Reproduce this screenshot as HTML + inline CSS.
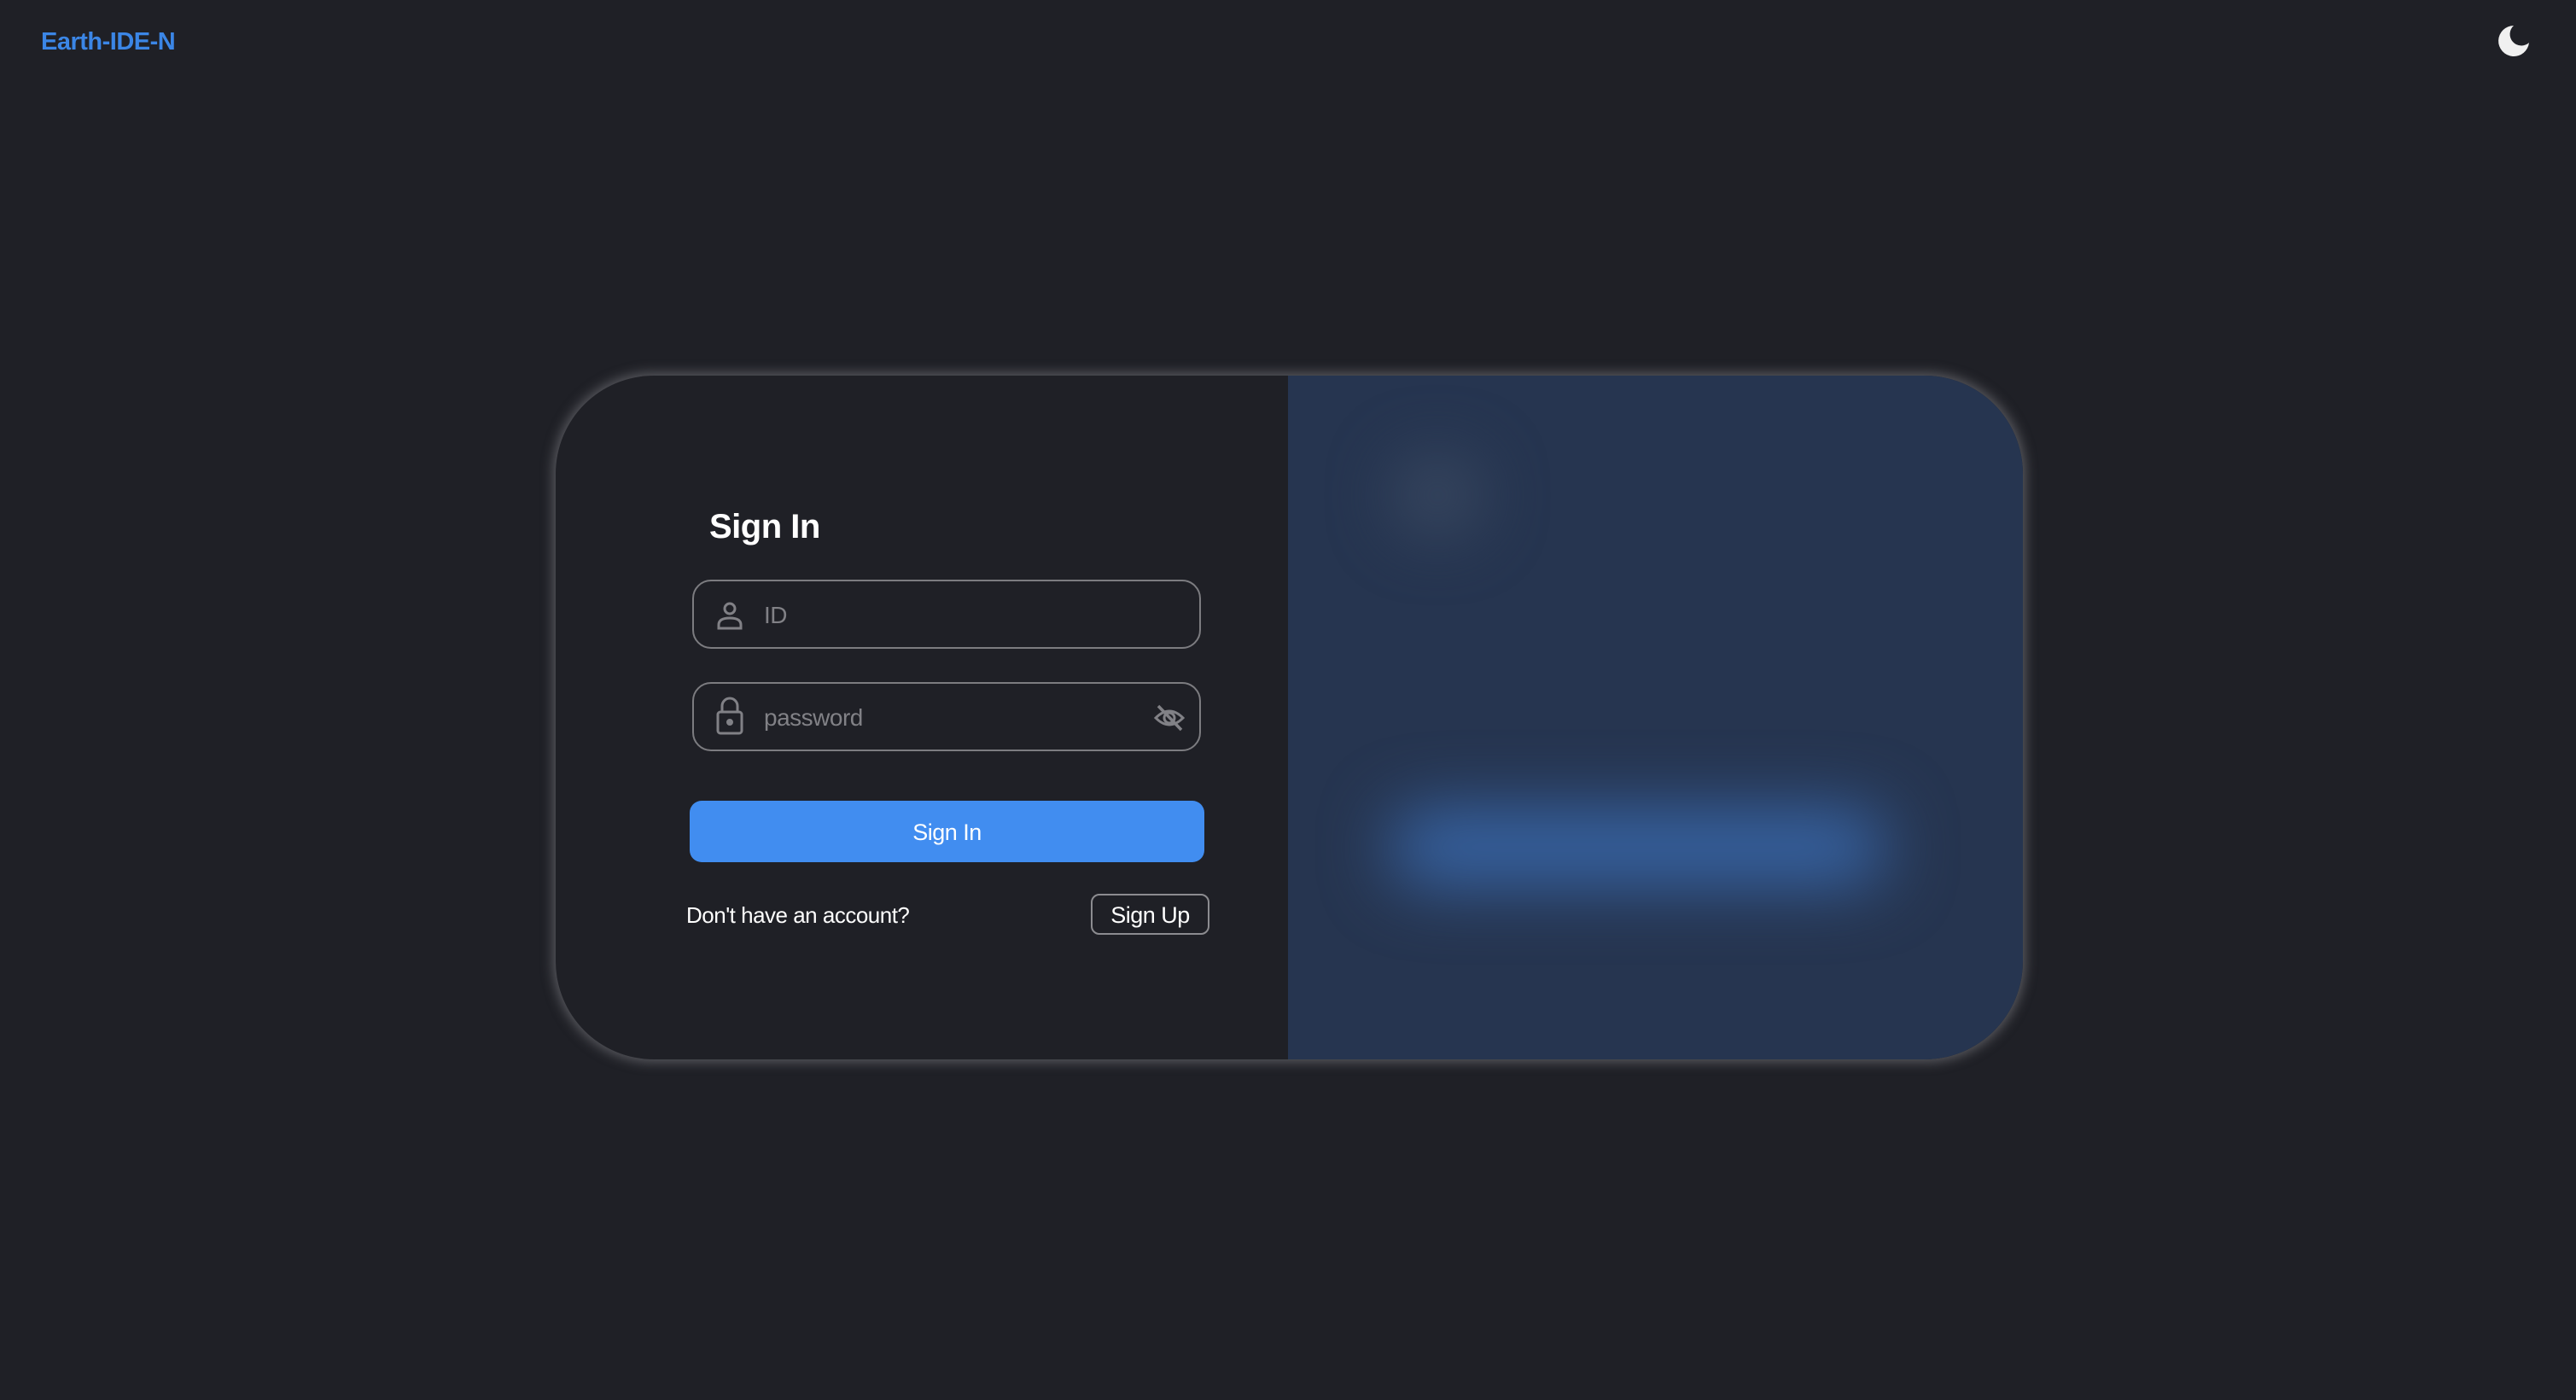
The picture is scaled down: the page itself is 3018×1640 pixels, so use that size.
<!DOCTYPE html>
<html><head><meta charset="utf-8"><style>
html,body{margin:0;padding:0;}
body{width:3018px;height:1640px;background:#1f2026;position:relative;overflow:hidden;font-family:"Liberation Sans",sans-serif;}
.logo{position:absolute;left:48px;top:33px;font-size:29px;font-weight:bold;color:#3b86e6;letter-spacing:-0.5px;}
.card{position:absolute;left:651px;top:440px;width:1719px;height:801px;border-radius:115px;background:#1f2026;box-shadow:0 0 14px 3px rgba(140,140,145,0.55);overflow:hidden;}
.right{position:absolute;left:858px;top:0;width:861px;height:801px;background:#263550;overflow:hidden;}
.blob{position:absolute;left:120px;top:90px;width:110px;height:100px;border-radius:50%;background:#36455e;filter:blur(35px);}
.bar{position:absolute;left:120px;top:510px;width:580px;height:85px;border-radius:40px;background:#3866a8;filter:blur(40px);}
h1{position:absolute;left:180px;top:155px;margin:0;font-size:40px;color:#fff;font-weight:bold;letter-spacing:-0.5px;}
.inp{position:absolute;left:160px;width:596px;height:81px;border:2px solid #7c7c80;border-radius:22px;box-sizing:border-box;}
.inp span{position:absolute;left:82px;top:24px;font-size:28px;color:#818186;letter-spacing:-0.5px;}
.btn{position:absolute;left:157px;top:498px;width:603px;height:72px;border-radius:14px;background:#418df0;color:#fff;font-size:27px;text-align:center;line-height:74px;letter-spacing:-0.5px;}
.q{position:absolute;left:153px;top:617px;font-size:26px;color:#fff;letter-spacing:-0.5px;}
.up{position:absolute;left:627px;top:607px;width:139px;height:48px;border:2px solid #8c8c90;border-radius:10px;box-sizing:border-box;color:#fff;font-size:27px;text-align:center;line-height:46px;letter-spacing:-0.5px;}
</style></head><body>
<div class="logo">Earth-IDE-N</div>
<svg style="position:absolute;left:2925px;top:28px" width="40" height="40" viewBox="0 0 40 40"><path d="M20 2 A18 18 0 1 0 38 22 A12 12 0 0 1 20 2Z" fill="#f0f0f0"/></svg>
<div class="card">
  <h1>Sign In</h1>
  <div class="inp" style="top:239px">
    <svg style="position:absolute;left:24px;top:22px" width="36" height="36" viewBox="0 0 36 36" fill="none" stroke="#818186" stroke-width="3"><circle cx="18" cy="10" r="6"/><path d="M5 33 V29 Q5 21 18 21 Q31 21 31 29 V33 Z"/></svg>
    <span>ID</span>
  </div>
  <div class="inp" style="top:359px">
    <svg style="position:absolute;left:24px;top:14px" width="36" height="48" viewBox="0 0 36 48" fill="none" stroke="#818186" stroke-width="3"><path d="M9 19 V12 A9 9 0 0 1 27 12 V19"/><rect x="4" y="19" width="28" height="25" rx="3"/><circle cx="18" cy="31" r="2.5" fill="#818186"/></svg>
    <span>password</span>
    <svg style="position:absolute;left:538px;top:22px" width="38" height="36" viewBox="0 0 38 36" fill="none" stroke="#818186" stroke-width="3"><path d="M3 18 Q19 2 35 18 Q19 34 3 18Z"/><circle cx="19" cy="18" r="6"/><path d="M6 4 L33 32" stroke-width="3.5"/></svg>
  </div>
  <div class="btn">Sign In</div>
  <div class="q">Don't have an account?</div>
  <div class="up">Sign Up</div>
  <div class="right"><div class="blob"></div><div class="bar"></div></div>
</div>
</body></html>
